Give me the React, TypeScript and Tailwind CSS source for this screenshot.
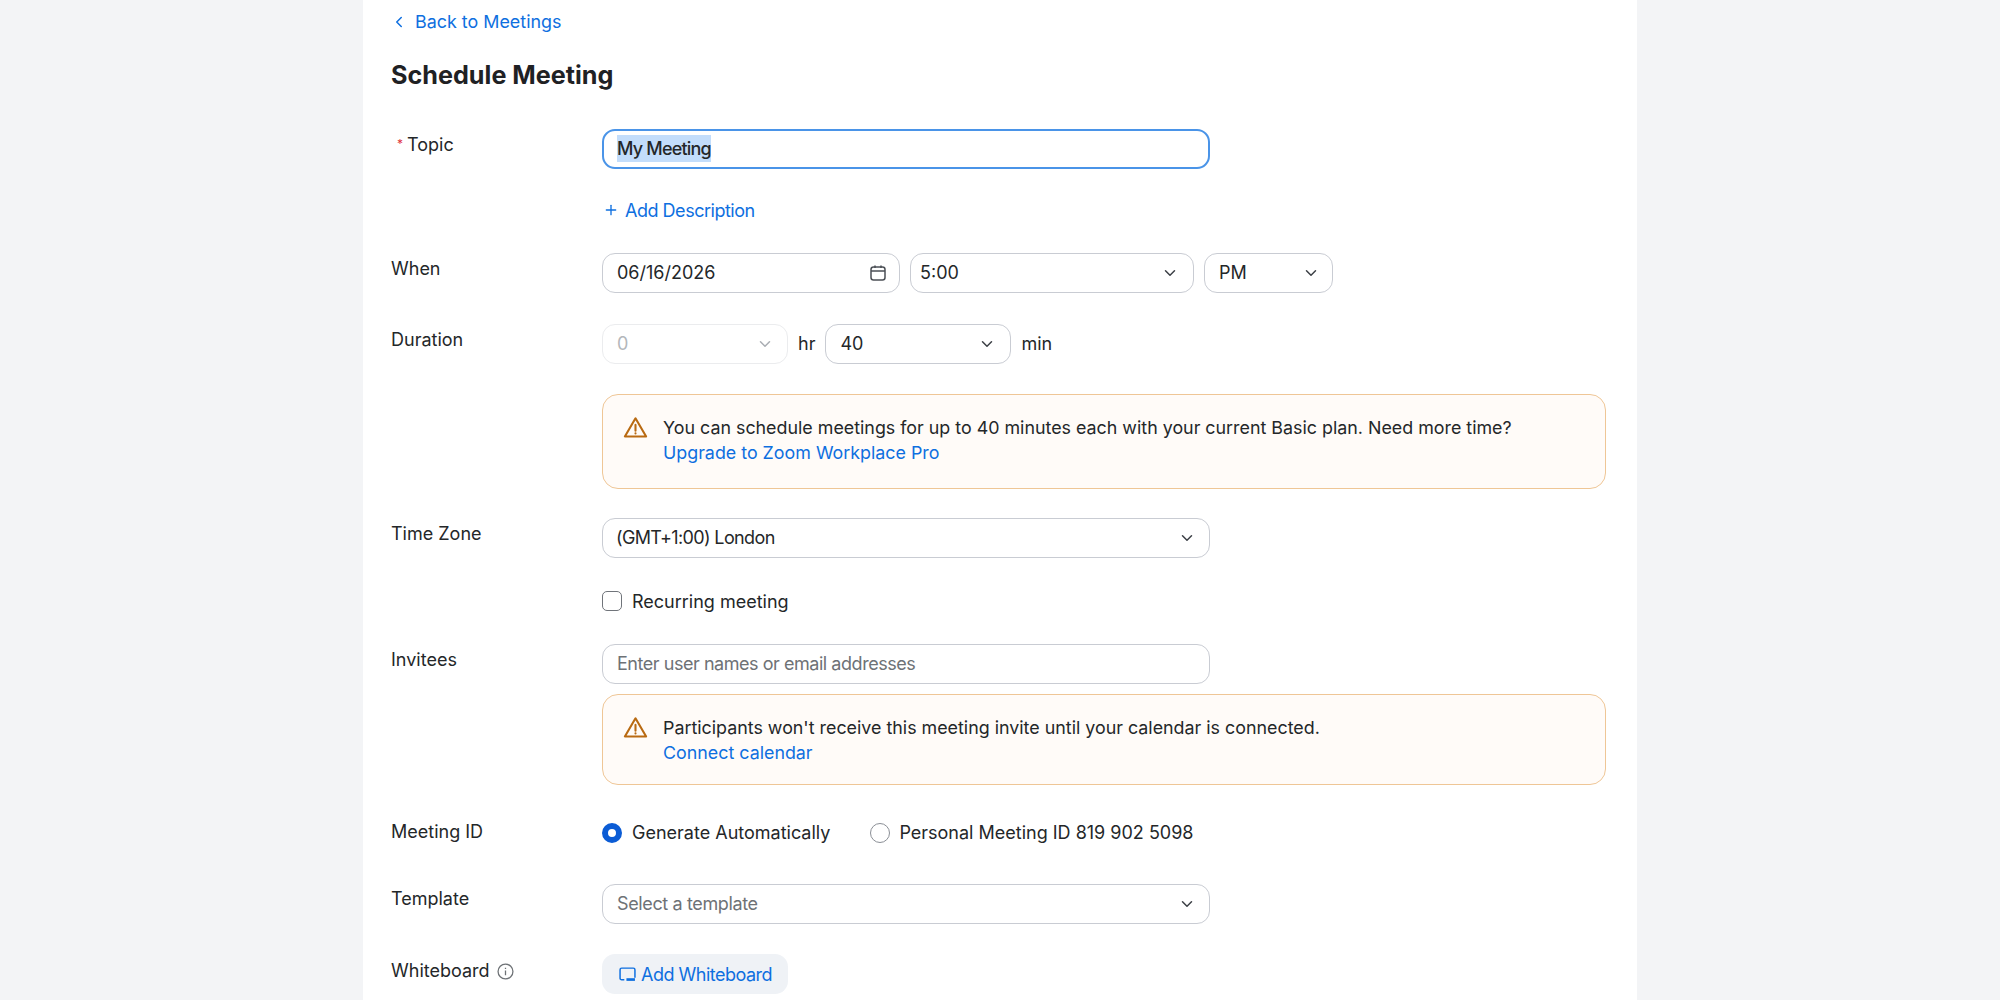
import { ChevronDown, ChevronLeft, Plus } from 'lucide-react';
import { ReactNode } from 'react';

const inputBox = 'flex items-center rounded-[13px] border-[1.5px] border-[#c9ccd3] bg-white h-[40px] pl-[14px] pr-[13px] pb-[1px] text-[18px] text-[#242729]';

const Label = ({ children, className = '' }: { children: ReactNode; className?: string }) => (
  <div className={`w-[211px] shrink-0 text-[18px] leading-[26px] text-[#242729] ${className}`}>{children}</div>
);

const Caret = ({ muted }: { muted?: boolean }) => (
  <ChevronDown className={`ml-auto size-[18px] ${muted ? 'text-[#a9adb3]' : 'text-[#3c4046]'}`} strokeWidth={2} />
);

const CalendarIcon = () => (
  <svg className="ml-auto mr-[-1px]" width="18" height="18" viewBox="0 0 18 18" fill="none" stroke="#4b4f55" strokeWidth="1.5">
    <rect x="2" y="3" width="14" height="13" rx="2.5" />
    <path d="M2 7h14M6 1.5V4M12 1.5V4" />
  </svg>
);

const WarnIcon = () => (
  <svg className="shrink-0" width="25" height="25" viewBox="0 0 24 24" fill="none" stroke="#b96a12" strokeWidth="2" strokeLinejoin="round" strokeLinecap="round">
    <path d="M12 3.2 1.8 20.6h20.4L12 3.2Z" />
    <path d="M12 9.5v5.5M12 17.6v.2" />
  </svg>
);

const Alert = ({ text, link, className }: { text: string; link: string; className: string }) => (
  <div className={`flex gap-[15px] w-[1004px] rounded-[16px] border-[1.5px] border-[#efc696] bg-[#fffbf8] pl-[20px] ${className}`}>
    <WarnIcon />
    <div className="text-[17.85px] leading-[25px] text-[#242729]">
      <div>{text}</div>
      <a className="text-[#0e6fe0]">{link}</a>
    </div>
  </div>
);

const Radio = ({ on }: { on?: boolean }) =>
  on ? (
    <span className="size-[20px] rounded-full border-[6px] border-[#0b5cd5] bg-white" />
  ) : (
    <span className="size-[20px] rounded-full border-[1.5px] border-[#8b8f96] bg-white" />
  );

export default function App() {
  return (
    <div className="h-[1000px] overflow-hidden bg-[#f3f4f6] flex justify-center" style={{ fontFamily: 'Inter, sans-serif' }}>
      <div className="w-[1274px] h-full bg-white pl-[28px]">
        {/* back link */}
        <a className="flex items-center h-[44px] text-[17.9px] text-[#0e6fe0]">
          <ChevronLeft className="size-[18px] -ml-[1px] mr-[7px]" strokeWidth={2} />
          Back to Meetings
        </a>
        <h1 className="mt-[14px] text-[25.2px] leading-[35px] font-bold text-[#1f2124]">Schedule Meeting</h1>

        <div className="flex mt-[36px]">
          <Label className="pt-[2px]"><span className="text-[#e0323c] text-[12px] pl-[6px] pr-[4px] align-[3px]">*</span>Topic</Label>
          <div className="flex items-center w-[608px] h-[40px] rounded-[13px] border-[2.5px] border-[#4a94e8] px-[13px] pb-[1px] text-[18px] font-medium tracking-[-0.8px] text-[#242729]">
            <span className="bg-[#c3ddfb]">My Meeting</span>
          </div>
        </div>

        <div className="flex mt-[28px]">
          <div className="w-[211px] shrink-0" />
          <a className="flex items-center h-[26px] pl-[1px] text-[18px] tracking-[-0.48px] text-[#0e6fe0]">
            <Plus className="size-[16px] mr-[6px]" strokeWidth={2} />
            Add Description
          </a>
        </div>

        <div className="flex mt-[30px]">
          <Label className="pt-[3px]">When</Label>
          <div className="flex gap-[10px]">
            <div className={`${inputBox} w-[298px]`}>06/16/2026<CalendarIcon /></div>
            <div className={`${inputBox} w-[284px] !pl-[9px] !pr-[14px]`}>5:00<Caret /></div>
            <div className={`${inputBox} w-[129px] !pr-[12px]`}>PM<Caret /></div>
          </div>
        </div>

        <div className="flex mt-[31px]">
          <Label className="pt-[3px]">Duration</Label>
          <div className="flex items-center">
            <div className={`${inputBox} w-[186px] !border-[#ebecee] !text-[#b4b7bb]`}>0<Caret muted /></div>
            <span className="mx-[10px] pb-[2px] text-[18px] text-[#242729]">hr</span>
            <div className={`${inputBox} w-[186px] !pr-[14px]`}>40<Caret /></div>
            <span className="ml-[10px] pb-[2px] text-[18px] text-[#242729]">min</span>
          </div>
        </div>

        <div className="flex mt-[30px]">
          <div className="w-[211px] shrink-0" />
          <Alert
            className="h-[95px] pt-[20px]"
            text="You can schedule meetings for up to 40 minutes each with your current Basic plan. Need more time?"
            link="Upgrade to Zoom Workplace Pro"
          />
        </div>

        <div className="flex mt-[29px]">
          <Label className="pt-[3px]">Time Zone</Label>
          <div className={`${inputBox} w-[608px] !pl-[13px] tracking-[-0.63px]`}>(GMT+1:00) London<Caret /></div>
        </div>

        <div className="flex mt-[30px]">
          <div className="w-[211px] shrink-0" />
          <label className="flex items-center h-[26px] gap-[10px] text-[18px] text-[#242729]">
            <span className="size-[20px] rounded-[5px] border-[1.5px] border-[#70747a] bg-white" />
            Recurring meeting
          </label>
        </div>

        <div className="flex mt-[30px]">
          <Label className="pt-[3px]">Invitees</Label>
          <div className={`${inputBox} w-[608px] !text-[#6e7276] tracking-[-0.46px]`}>Enter user names or email addresses</div>
        </div>

        <div className="flex mt-[10px]">
          <div className="w-[211px] shrink-0" />
          <Alert
            className="h-[91px] pt-[20px]"
            text="Participants won't receive this meeting invite until your calendar is connected."
            link="Connect calendar"
          />
        </div>

        <div className="flex mt-[34px] items-center">
          <Label className="-translate-y-[1px]">Meeting ID</Label>
          <div className="flex items-center text-[18px] text-[#242729]">
            <Radio on />
            <span className="ml-[10px] mr-[40px]">Generate Automatically</span>
            <Radio />
            <span className="ml-[9px]">Personal Meeting ID 819 902 5098</span>
          </div>
        </div>

        <div className="flex mt-[38px]">
          <Label className="pt-[2px]">Template</Label>
          <div className={`${inputBox} w-[608px] !text-[#6e7276] tracking-[-0.37px]`}>Select a template<Caret /></div>
        </div>

        <div className="flex mt-[30px]">
          <Label className="pt-[4px]">
            <span className="flex items-center gap-[7px]">
              Whiteboard
              <svg width="17" height="17" viewBox="0 0 16 16" fill="none" stroke="#6e7276" strokeWidth="1.2">
                <circle cx="8" cy="8" r="7" />
                <path d="M8 7v4.5M8 4.4v1.2" />
              </svg>
            </span>
          </Label>
          <button className="flex items-center w-[186px] h-[40px] rounded-[13px] bg-[#eff2f6] pl-[17px] text-[18px] tracking-[-0.5px] text-[#0e6fe0]">
            <svg className="mr-[5px]" width="17" height="15" viewBox="0 0 16 14" fill="none" stroke="#0e6fe0" strokeWidth="1.4">
              <path d="M5 12H2.5A1.5 1.5 0 0 1 1 10.5v-8A1.5 1.5 0 0 1 2.5 1h11A1.5 1.5 0 0 1 15 2.5V10" />
              <rect x="7" y="10.5" width="8" height="2.5" fill="#0e6fe0" stroke="none" />
            </svg>
            Add Whiteboard
          </button>
        </div>
      </div>
    </div>
  );
}
